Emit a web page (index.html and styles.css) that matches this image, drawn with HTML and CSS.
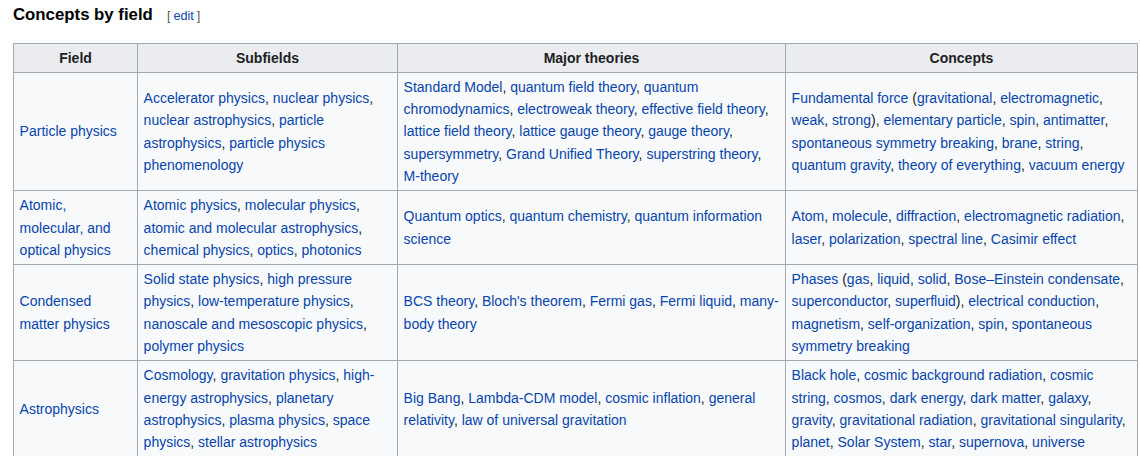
FILE: index.html
```html
<!DOCTYPE html>
<html lang="en">
<head>
<meta charset="utf-8">
<title>Concepts by field</title>
<link rel="stylesheet" href="styles.css">
</head>
<body>
<div class="content">
  <h3 class="heading"><span class="headline">Concepts by field</span><span class="editsection"><span class="bracket">[</span><a href="#">edit</a><span class="bracket">]</span></span></h3>
  <table class="wikitable">
    <colgroup>
      <col class="c1"><col class="c2"><col class="c3"><col class="c4">
    </colgroup>
    <thead>
      <tr><th>Field</th><th>Subfields</th><th>Major theories</th><th>Concepts</th></tr>
    </thead>
    <tbody>
      <tr>
        <td><a href="#">Particle physics</a></td>
        <td><a href="#">Accelerator physics</a>, <a href="#">nuclear physics</a>, <a href="#">nuclear astrophysics</a>, <a href="#">particle astrophysics</a>, <a href="#">particle physics phenomenology</a></td>
        <td><a href="#">Standard Model</a>, <a href="#">quantum field theory</a>, <a href="#">quantum chromodynamics</a>, <a href="#">electroweak theory</a>, <a href="#">effective field theory</a>, <a href="#">lattice field theory</a>, <a href="#">lattice gauge theory</a>, <a href="#">gauge theory</a>, <a href="#">supersymmetry</a>, <a href="#">Grand Unified Theory</a>, <a href="#">superstring theory</a>, <a href="#">M-theory</a></td>
        <td><a href="#">Fundamental force</a> (<a href="#">gravitational</a>, <a href="#">electromagnetic</a>, <a href="#">weak</a>, <a href="#">strong</a>), <a href="#">elementary particle</a>, <a href="#">spin</a>, <a href="#">antimatter</a>, <a href="#">spontaneous symmetry breaking</a>, <a href="#">brane</a>, <a href="#">string</a>, <a href="#">quantum gravity</a>, <a href="#">theory of everything</a>, <a href="#">vacuum energy</a></td>
      </tr>
      <tr>
        <td><a href="#">Atomic, molecular, and optical physics</a></td>
        <td><a href="#">Atomic physics</a>, <a href="#">molecular physics</a>, <a href="#">atomic and molecular astrophysics</a>, <a href="#">chemical physics</a>, <a href="#">optics</a>, <a href="#">photonics</a></td>
        <td><a href="#">Quantum optics</a>, <a href="#">quantum chemistry</a>, <a href="#">quantum information science</a></td>
        <td><a href="#">Atom</a>, <a href="#">molecule</a>, <a href="#">diffraction</a>, <a href="#">electromagnetic radiation</a>, <a href="#">laser</a>, <a href="#">polarization</a>, <a href="#">spectral line</a>, <a href="#">Casimir effect</a></td>
      </tr>
      <tr>
        <td><a href="#">Condensed matter physics</a></td>
        <td><a href="#">Solid state physics</a>, <a href="#">high pressure physics</a>, <a href="#">low-temperature physics</a>, <a href="#">nanoscale and mesoscopic physics</a>, <a href="#">polymer physics</a></td>
        <td><a href="#">BCS theory</a>, <a href="#">Bloch's theorem</a>, <a href="#">Fermi gas</a>, <a href="#">Fermi liquid</a>, <a href="#">many-body theory</a></td>
        <td><a href="#">Phases</a> (<a href="#">gas</a>, <a href="#">liquid</a>, <a href="#">solid</a>, <a href="#">Bose–Einstein condensate</a>, <a href="#">superconductor</a>, <a href="#">superfluid</a>), <a href="#">electrical conduction</a>, <a href="#">magnetism</a>, <a href="#">self-organization</a>, <a href="#">spin</a>, <a href="#">spontaneous symmetry breaking</a></td>
      </tr>
      <tr>
        <td><a href="#">Astrophysics</a></td>
        <td><a href="#">Cosmology</a>, <a href="#">gravitation physics</a>, <a href="#">high-energy astrophysics</a>, <a href="#">planetary astrophysics</a>, <a href="#">plasma physics</a>, <a href="#">space physics</a>, <a href="#">stellar astrophysics</a></td>
        <td><a href="#">Big Bang</a>, <a href="#">Lambda-CDM model</a>, <a href="#">cosmic inflation</a>, <a href="#">general relativity</a>, <a href="#">law of universal gravitation</a></td>
        <td><a href="#">Black hole</a>, <a href="#">cosmic background radiation</a>, <a href="#">cosmic string</a>, <a href="#">cosmos</a>, <a href="#">dark energy</a>, <a href="#">dark matter</a>, <a href="#">galaxy</a>, <a href="#">gravity</a>, <a href="#">gravitational radiation</a>, <a href="#">gravitational singularity</a>, <a href="#">planet</a>, <a href="#">Solar System</a>, <a href="#">star</a>, <a href="#">supernova</a>, <a href="#">universe</a></td>
      </tr>
    </tbody>
  </table>
</div>
</body>
</html>
```

FILE: styles.css
```css
html, body {
  margin: 0;
  padding: 0;
  background: #ffffff;
}

body {
  font-family: "Liberation Sans", Arial, sans-serif;
  font-size: 14px;
  line-height: 1.6;
  color: #202122;
}

.content {
  padding: 2px 3px 0 13px;
}

a {
  color: #0645ad;
  text-decoration: none;
}

.heading {
  margin: 0 0 14px 0;
  font-size: 16.8px;
  font-weight: bold;
  line-height: 1.6;
  color: #000000;
}

.editsection {
  font-size: 12.6px;
  font-weight: normal;
  margin-left: 14px;
  vertical-align: baseline;
}

.editsection .bracket {
  color: #54595d;
}

.editsection .bracket:first-child {
  margin-right: 3px;
}

.editsection a + .bracket {
  margin-left: 3px;
}

.wikitable {
  border-collapse: collapse;
  table-layout: fixed;
  width: 1124px;
  background: #f8f9fa;
  color: #202122;
  border: 1px solid #a2a9b1;
}

.c1 { width: 124px; }
.c2 { width: 260px; }
.c3 { width: 388px; }
.c4 { width: 352px; }

.wikitable th,
.wikitable td {
  border: 1px solid #a2a9b1;
  padding: 2.8px 5.6px;
  vertical-align: middle;
  text-align: left;
}

.wikitable th {
  background: #eaecf0;
  font-weight: bold;
  text-align: center;
}
```
